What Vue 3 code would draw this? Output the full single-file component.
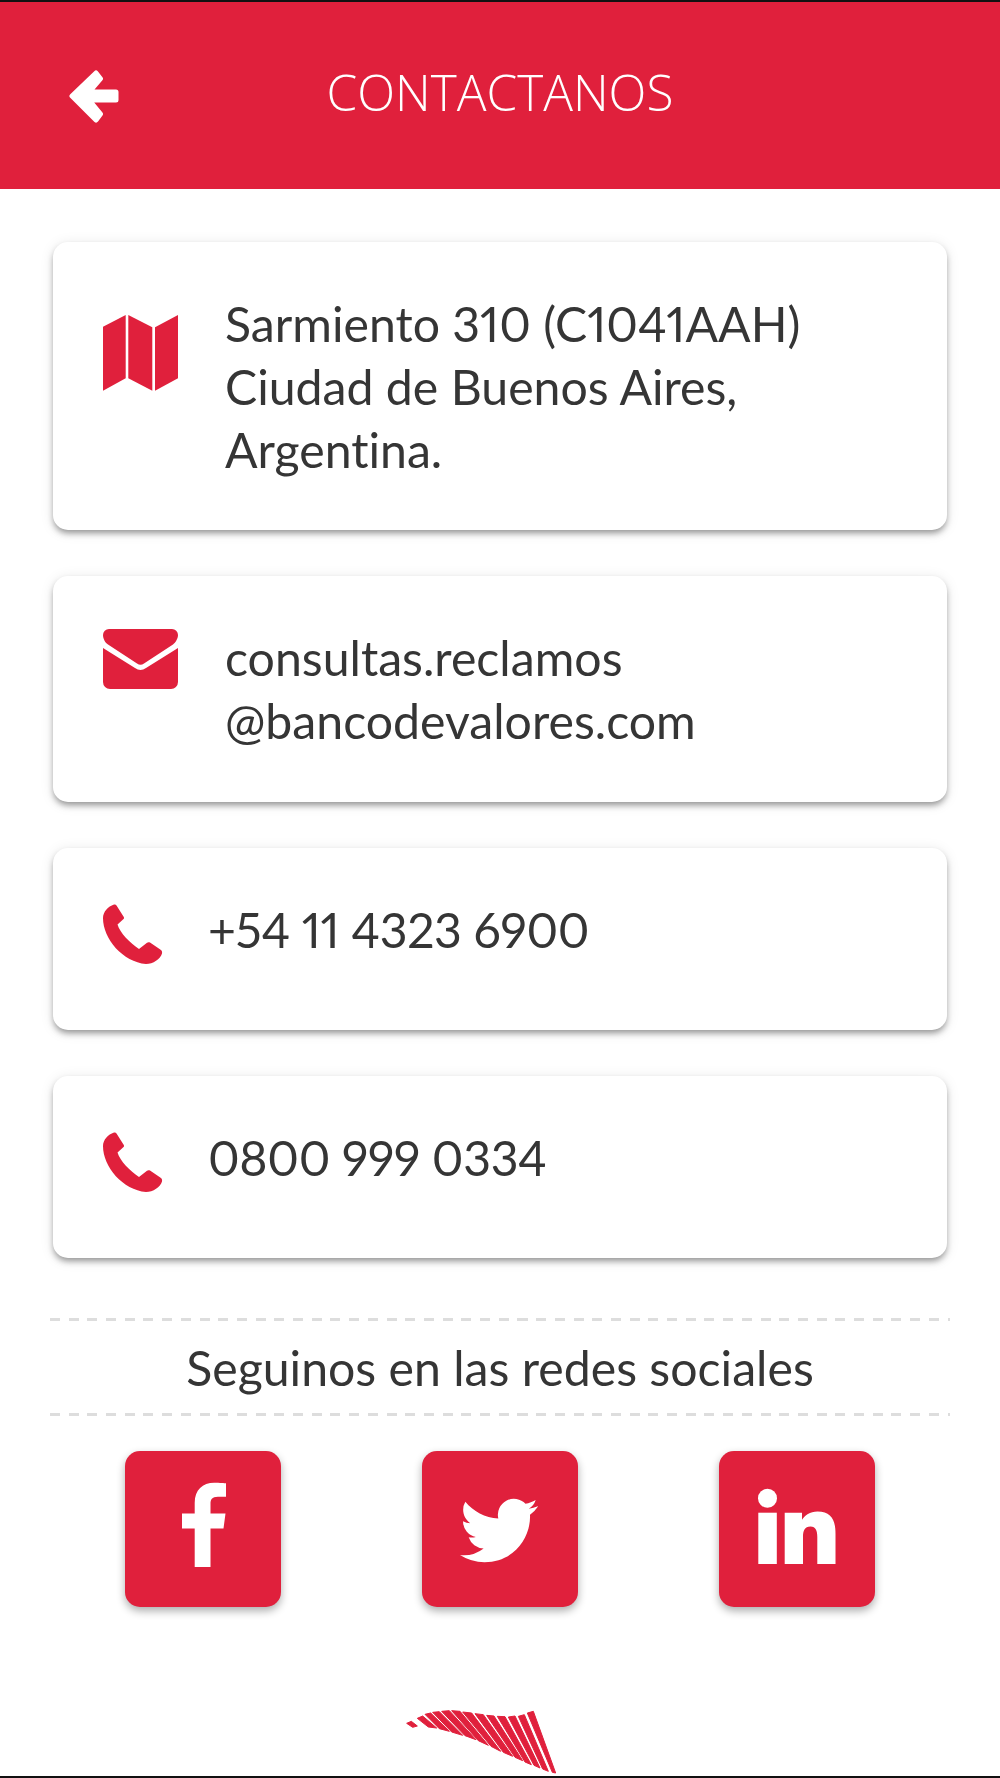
<script setup>
const stripes = [
  '50,106 64,100 82,114 68,118',
  '82,91 98,84 140,120 115,117',
  '105,79 122,75 178,130 148,122',
  '128,73 148,71 218,142 185,132',
  '155,70 178,68 258,155 225,143',
  '185,68 210,70 295,172 265,158',
  '218,72 245,75 332,190 303,175',
  '255,77 280,80 368,205 340,193',
  '290,82 312,84 398,218 375,208',
  '322,85 345,86 424,230 405,222',
  '355,87 375,84 450,240 432,232',
  '385,85 403,80 475,250 458,243',
  '412,75 430,70 497,255 487,253'
]
</script>

<template>
  <div class="page">
    <header class="bar">
      <svg class="back" width="50" height="53" viewBox="0 0 50 53">
        <path class="back-shape" d="M27 3 L31.5 8.7 L20 22 H47 V30 H20 L31.5 44 L27 50 L3 26 Z" />
      </svg>
      <h1 class="title">CONTACTANOS</h1>
    </header>

    <main class="content">
      <section class="card card-address">
        <svg class="icon icon-map" width="75" height="76" viewBox="0 0 75 76">
          <path d="M0 11.7 22.7 0V63.3L0 75.7Z" />
          <path d="M25.3 0 49.3 12.3V75.7L25.3 63.3Z" />
          <path d="M52 12.3 75 0V63.3L52 75.7Z" />
        </svg>
        <p class="card-text">Sarmiento 310 (C1041AAH)<br />Ciudad de Buenos Aires,<br />Argentina.</p>
      </section>

      <section class="card card-mail">
        <svg class="icon icon-mail" width="75" height="60" viewBox="0 0 75 60">
          <path d="M6 0H69a6 6 0 0 1 6 6c0 4-3 8-5 9.5L41 34.500a6 6 0 0 1-7 0L5 15.500C2.500 14 0 10 0 6A6 6 0 0 1 6 0Z" />
          <path d="M0 19 32 39a9 9 0 0 0 11 0L75 19V53a7 7 0 0 1-7 7H7a7 7 0 0 1-7-7Z" />
        </svg>
        <p class="card-text">consultas.reclamos<br />@bancodevalores.com</p>
      </section>

      <section class="card card-phone">
        <svg class="icon icon-phone" width="60" height="60" viewBox="0 0 60 60">
          <path d="M11 .5C12.200.2 13 .6 13.500 1.500L20.800 13C21.300 14 21 15 20 15.600L14.500 20.500C17 29 27 39 36 45L44 38.800C45 38 46 38 47 38.600L58 46C59 46.800 59.300 48 59 49.500 57.500 55 50 60 43 60 20 58 0 35 0 14 0 8 5 2.500 11 .5Z" />
        </svg>
        <p class="card-text phone-text">+54 11 4323 6900</p>
      </section>

      <section class="card card-phone">
        <svg class="icon icon-phone" width="60" height="60" viewBox="0 0 60 60">
          <path d="M11 .5C12.200.2 13 .6 13.500 1.500L20.800 13C21.300 14 21 15 20 15.600L14.500 20.500C17 29 27 39 36 45L44 38.800C45 38 46 38 47 38.600L58 46C59 46.800 59.300 48 59 49.500 57.500 55 50 60 43 60 20 58 0 35 0 14 0 8 5 2.500 11 .5Z" />
        </svg>
        <p class="card-text phone-text">0800 999 0334</p>
      </section>

      <div class="social-heading">
        <p>Seguinos en las redes sociales</p>
      </div>

      <div class="social-row">
        <a class="social">
          <svg width="156" height="156" viewBox="0 0 156 156">
            <path d="M85.500 116V77.500H98.500L100.500 62.500H85.500V53C85.500 48.600 86.700 45.700 93 45.700H101V32.300C99.600 32.100 94.800 31.700 89.200 31.700 77.600 31.700 69.700 38.700 69.700 51.700V62.500H57V77.500H69.700V116Z" />
          </svg>
        </a>
        <a class="social">
          <svg width="156" height="156" viewBox="0 0 156 156">
            <g transform="translate(38 40.500) scale(3.250)">
              <path d="M23.953 4.570a10 10 0 0 1-2.825.775 4.958 4.958 0 0 0 2.163-2.723c-.951.555-2.005.959-3.127 1.184a4.920 4.920 0 0 0-8.384 4.482C7.690 8.095 4.067 6.130 1.640 3.162a4.822 4.822 0 0 0-.666 2.475c0 1.710.870 3.213 2.188 4.096a4.904 4.904 0 0 1-2.228-.616v.060a4.923 4.923 0 0 0 3.946 4.827 4.996 4.996 0 0 1-2.212.085 4.936 4.936 0 0 0 4.604 3.417 9.867 9.867 0 0 1-6.102 2.105c-.390 0-.779-.023-1.170-.067a13.995 13.995 0 0 0 7.557 2.209c9.053 0 13.998-7.496 13.998-13.985 0-.210 0-.420-.015-.630A9.935 9.935 0 0 0 24 4.590z" />
            </g>
          </svg>
        </a>
        <a class="social">
          <svg width="156" height="156" viewBox="0 0 156 156">
            <circle cx="48.500" cy="47.300" r="9.500" />
            <rect x="39.300" y="61.700" width="18.500" height="51.300" />
            <path d="M65.700 61.700H83V68.700C85.600 64.500 91 60.500 98.500 60.500 112.500 60.500 116.500 69.500 116.500 82.500V113H98.300V86C98.300 80 96.800 75.500 91.500 75.500 85.500 75.500 84 80 84 86V113H65.700Z" />
          </svg>
        </a>
      </div>
    </main>

    <svg class="logo" width="200" height="88" viewBox="0 0 600 264">
      <polygon v-for="(p, i) in stripes" :key="i" :points="p" />
    </svg>
  </div>
</template>

<style>
html, body { margin: 0; background: #fff; }
</style>

<style scoped>
.page {
  box-sizing: border-box;
  width: 1000px;
  height: 1778px;
  display: flex;
  flex-direction: column;
  overflow: hidden;
  background: #fff;
  border-top: 2px solid #111;
  border-bottom: 2px solid #111;
  color: #353535;
  font-family: Lato, "Open Sans", sans-serif;
  font-variant-ligatures: none;
  font-variant-numeric: proportional-nums;
}
.bar {
  height: 187px;
  flex: none;
  position: relative;
  display: flex;
  align-items: center;
  justify-content: center;
  background: #e0203c;
}
.back {
  position: absolute;
  left: 69px;
  top: 68px;
}
.back-shape {
  fill: #fff;
  stroke: #fff;
  stroke-width: 5;
  stroke-linejoin: round;
}
.title {
  margin: 0 0 6px;
  color: #fff;
  font-family: "Open Sans", sans-serif;
  font-weight: 300;
  font-size: 49.5px;
  line-height: 1;
}
.content {
  padding: 53px 50px 0;
  display: flex;
  flex-direction: column;
}
.card {
  margin: 0 3px 46px;
  display: flex;
  align-items: flex-start;
  padding: 50px 50px 49px;
  background: #fff;
  border-radius: 15px;
  box-shadow: 0 4px 6px -1px rgba(0, 0, 0, .38), 0 2px 14px rgba(0, 0, 0, .1);
}
.card-mail { padding-bottom: 50px; }
.card-phone { padding-bottom: 66px; }
.icon { flex: none; fill: #e0203c; }
.icon-map { margin: 23px 47px 0 0; }
.icon-mail { margin: 3px 47px 0 0; }
.icon-phone { margin: 6px 45px 0 0; }
.card-text {
  margin: 0;
  font-size: 48.200px;
  line-height: 63px;
}
.phone-text { letter-spacing: -.35px; }
.social-heading {
  margin-top: 14px;
  height: 98px;
  background-image:
    repeating-linear-gradient(90deg, #ddd 0 10px, transparent 10px 18.700px),
    repeating-linear-gradient(90deg, #ddd 0 10px, transparent 10px 18.700px);
  background-size: 100% 3px, 100% 3px;
  background-position: 0 0, 0 100%;
  background-repeat: no-repeat;
}
.social-heading p {
  margin: 0;
  text-align: center;
  font-size: 48.200px;
  line-height: 98px;
}
.social-row {
  margin-top: 35px;
  padding: 0 75px;
  display: flex;
  justify-content: space-between;
}
.social {
  width: 156px;
  height: 156px;
  border-radius: 15px;
  background: #e0203c;
  box-shadow: 0 4px 8px rgba(0, 0, 0, .32);
}
.social svg { display: block; fill: #fff; }
.logo {
  flex: none;
  margin: auto 0 0 390px;
  fill: #e0203c;
  stroke: #e0203c;
  stroke-width: 3;
  stroke-linejoin: round;
}
</style>
